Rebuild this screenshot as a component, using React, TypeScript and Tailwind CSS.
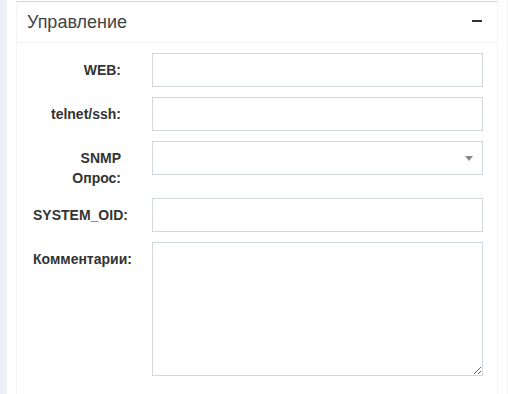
import React from "react";

const font = { fontFamily: '"Liberation Sans", Arial, sans-serif' };

const Label: React.FC<{ text: React.ReactNode }> = ({ text }) => (
  <label className="ml-[16px] w-[88px] shrink-0 pt-[7px] text-right text-[14px] font-bold leading-[20px] text-[#333]">
    {text}
  </label>
);

const TextInput = () => (
  <input
    type="text"
    className="ml-[31px] h-[34px] w-[331px] border border-[#d2d6de] bg-white px-3 text-[14px] text-[#555] outline-none"
  />
);

const SelectBox = () => (
  <div className="relative ml-[31px] h-[34px] w-[331px] border border-[#d2d6de] bg-white">
    <span className="absolute right-[9px] top-[14px] h-0 w-0 border-x-[4px] border-t-[5px] border-x-transparent border-t-[#888]" />
  </div>
);

export default function App() {
  return (
    <div className="flex min-h-[394px] bg-[#ecf0f5] pl-[7px]" style={font}>
      <div className="flex-1 border-r border-[#f4f4f4] bg-white pl-[9px] pr-[9px]">
        <div className="mt-[1px] w-[482px] border-x border-t border-x-[#f4f4f4] border-t-[#d2d6de] bg-white">
          {/* header */}
          <div className="flex h-[41px] items-center justify-between border-b border-[#f4f4f4] pl-[10px] pr-[15px]">
            <h3 className="text-[18px] font-normal leading-[20px] text-[#444]">Управление</h3>
            <span className="mb-[2px] h-[2px] w-[10px] bg-[#333]" />
          </div>

          {/* body */}
          <div className="flex flex-col gap-[10px] pt-[10px] pb-[18px]">
            <div className="flex items-start">
              <Label text="WEB:" />
              <TextInput />
            </div>
            <div className="flex items-start">
              <Label text="telnet/ssh:" />
              <TextInput />
            </div>
            <div className="flex items-start">
              <Label text="SNMP Опрос:" />
              <SelectBox />
            </div>
            <div className="flex items-start">
              <Label text="SYSTEM_OID:" />
              <TextInput />
            </div>
            <div className="flex items-start">
              <Label text="Комментарии:" />
              <textarea className="ml-[31px] h-[134px] w-[331px] border border-[#d2d6de] bg-white px-3 py-[6px] text-[14px] text-[#555] outline-none" />
            </div>
          </div>
        </div>
      </div>
    </div>
  );
}
